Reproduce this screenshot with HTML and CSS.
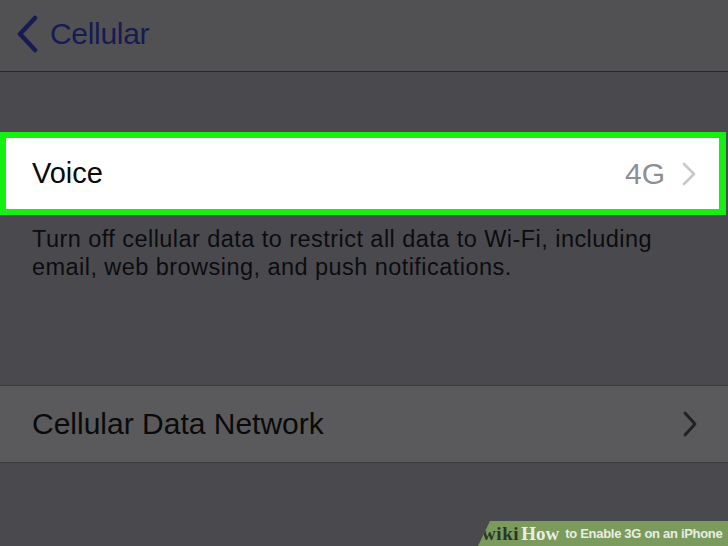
FILE: index.html
```html
<!DOCTYPE html>
<html>
<head>
<meta charset="utf-8">
<link rel="stylesheet" href="styles.css">
</head>
<body>
<div class="screen">
  <header class="nav">
    <svg class="back" width="26" height="38" viewBox="0 0 26 38"><path d="M21 3 L6 19 L21 35" fill="none" stroke="#171b52" stroke-width="4.5" stroke-linecap="round" stroke-linejoin="round"/></svg>
    <span class="nav-title">Cellular</span>
  </header>
  <div class="spacer-top"></div>
  <div class="row voice">
    <span class="label">Voice</span>
    <span class="value">4G</span>
    <svg class="chev" width="16" height="26" viewBox="0 0 16 26"><path d="M3 3 L13 13 L3 23" fill="none" stroke="#c7c7cc" stroke-width="2.6" stroke-linecap="round" stroke-linejoin="round"/></svg>
  </div>
  <p class="desc">Turn off cellular data to restrict all data to Wi-Fi, including email, web browsing, and push notifications.</p>
  <div class="row network">
    <span class="label big">Cellular Data Network</span>
    <svg class="chev" width="16" height="28" viewBox="0 0 16 28"><path d="M3 3 L13 14 L3 25" fill="none" stroke="#202024" stroke-width="2.8" stroke-linecap="round" stroke-linejoin="round"/></svg>
  </div>
  <div class="banner"><span class="wiki">wiki</span><span class="how">How</span><span class="rest">to Enable 3G on an iPhone</span></div>
</div>
</body>
</html>
```
FILE: styles.css
```css
* { box-sizing: border-box; }
html, body { margin: 0; padding: 0; }
body {
  width: 728px;
  height: 546px;
  overflow: hidden;
  background: #4a4a4e;
  font-family: "Liberation Sans", Arial, sans-serif;
}
.screen {
  position: relative;
  width: 728px;
  height: 546px;
  display: flex;
  flex-direction: column;
}
.nav {
  height: 72px;
  background: #515153;
  border-bottom: 1px solid #2a2a2d;
  display: flex;
  align-items: center;
  padding-left: 14px;
  padding-bottom: 4px;
}
.back { margin-right: 10px; }
.nav-title {
  color: #171b52;
  font-size: 30px;
  letter-spacing: -0.3px;
}
.spacer-top { height: 60px; }
.row {
  display: flex;
  align-items: center;
  padding-left: 32px;
  padding-right: 30px;
}
.voice {
  height: 83px;
  background: #ffffff;
  border: 6px solid #13f012;
  border-right-width: 7px;
  margin-right: 2px;
  padding-left: 26px;
  padding-right: 22px;
}
.label {
  flex: 1;
  color: #0a0a0a;
  font-size: 29px;
}
.value {
  color: #8e8e93;
  font-size: 30px;
  margin-right: 16px;
}
.desc {
  margin: 0;
  padding: 10px 60px 0 32px;
  font-size: 23.5px;
  letter-spacing: 0.45px;
  line-height: 28px;
  color: #0c0c0e;
  height: 170px;
}
.network {
  height: 78px;
  background: #5a5a5c;
  border-top: 1px solid #3a3a3e;
  border-bottom: 1px solid #3a3a3e;
}
.big { font-size: 30px; }
.banner {
  position: absolute;
  right: 0;
  bottom: 0;
  width: 250px;
  height: 25px;
  background: #7b9a5e;
  clip-path: polygon(12px 0, 100% 0, 100% 100%, 0 100%);
  display: flex;
  align-items: center;
  padding-left: 4px;
  white-space: nowrap;
}
.wiki {
  font-family: "Liberation Serif", serif;
  font-weight: bold;
  font-size: 19px;
  letter-spacing: 0.6px;
  color: #2c3524;
}
.how {
  margin-left: 2px;
  font-family: "Liberation Serif", serif;
  font-weight: bold;
  font-size: 19px;
  color: #e9eee2;
}
.rest {
  margin-left: 6px;
  font-weight: bold;
  font-size: 13px;
  color: #e9eee2;
  letter-spacing: -0.3px;
}
```
